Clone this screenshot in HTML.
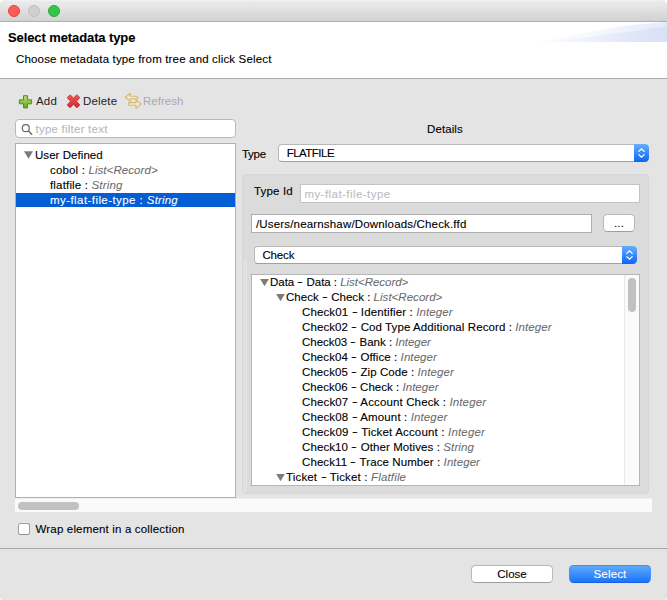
<!DOCTYPE html>
<html>
<head>
<meta charset="utf-8">
<title>Select metadata type</title>
<style>
*{box-sizing:border-box;margin:0;padding:0}
html{width:667px;height:600px;overflow:hidden;background:#fff}
body{width:667px;height:600px;overflow:hidden;background:#e4e4e4;border-radius:5px 5px 3px 3px}
body{font-family:"Liberation Sans",sans-serif;font-size:11.500px;letter-spacing:.17px;color:#000;position:relative;-webkit-text-stroke:.11px}
.abs{position:absolute}
.titlebar{left:0;top:0;width:667px;height:22px;background:linear-gradient(#f4f4f4 0,#ebebeb 1.500px,#d2d2d2 100%);border-bottom:1px solid #afafaf;border-radius:5px 5px 0 0}
.tl{position:absolute;top:5px;width:12px;height:12px;border-radius:50%}
.header{left:0;top:22px;width:667px;height:57px;background:#fff;border-bottom:1px solid #a9a9a9;overflow:hidden}
.h1{left:8px;top:30px;font-weight:bold;font-size:13px;line-height:16px;color:#000;white-space:nowrap;letter-spacing:-.1px}
.h2{left:16px;top:52px;line-height:14px;white-space:nowrap;color:#000;letter-spacing:.16px}
.tb{top:94px;line-height:14px;white-space:nowrap;-webkit-text-stroke:0;color:#1e1e24}
.field{background:#fff;border:1px solid #b4b4b4}
.row{position:absolute;left:0;height:15px;line-height:15px;white-space:nowrap;color:#000}
.row b{font-weight:normal;display:inline-block;position:relative;top:-.700px;width:6px;text-align:center;transform:scaleX(1.500);letter-spacing:0}
.row i{color:#6a6a6a;-webkit-text-stroke:.05px}
.tri{position:absolute;width:9px;height:7.500px;background:#7b7b7b;clip-path:polygon(0 0,100% 0,50% 100%)}
.combo{background:#fff;border-radius:4px;border:1px solid #b9b9b9;border-bottom-color:#a0a0a0;line-height:16px;white-space:nowrap}
.combo .arr{position:absolute;right:-1px;top:-1px;bottom:-1px;width:15px;background:linear-gradient(#66adfc,#3d8ffb 45%,#0b65fe);border-radius:0 4.500px 4.500px 0}
.btn{border-radius:4.500px;background:#fff;border:1px solid #b7b7b7;border-bottom-color:#9e9e9e;text-align:center;line-height:16px;white-space:nowrap}
</style>
</head>
<body>

<!-- title bar -->
<div class="abs titlebar">
  <div class="tl" style="left:8px;background:#fc5b57;border:1px solid #e2443f"></div>
  <div class="tl" style="left:28px;background:#d0d0d0;border:1px solid #bdbdbd"></div>
  <div class="tl" style="left:48px;background:#33c748;border:1px solid #27aa35"></div>
</div>

<!-- white header -->
<div class="abs header">
  <svg class="abs" style="left:500px;top:0" width="167" height="21" viewBox="500 22 167 21">
    <defs>
      <linearGradient id="sw1" x1="525" y1="0" x2="667" y2="0" gradientUnits="userSpaceOnUse"><stop offset="0" stop-color="#dfe6f9" stop-opacity="0"/><stop offset=".3" stop-color="#dfe6f9" stop-opacity=".22"/><stop offset=".65" stop-color="#dde5f8" stop-opacity=".62"/><stop offset="1" stop-color="#d8e0f6"/></linearGradient>
      <linearGradient id="sw2" x1="540" y1="0" x2="667" y2="0" gradientUnits="userSpaceOnUse"><stop offset="0" stop-color="#e8edfb" stop-opacity="0"/><stop offset=".35" stop-color="#e8edfb" stop-opacity=".3"/><stop offset=".7" stop-color="#e6ecfb" stop-opacity=".7"/><stop offset="1" stop-color="#e2e9fa"/></linearGradient>
    </defs>
    <path d="M538 42 C580 34 615 25 667 22 L667 42 Z" fill="url(#sw2)"/>
    <path d="M525 42 C585 39 630 31 667 26.500 L667 42 Z" fill="url(#sw1)"/>
  </svg>
</div>
<div class="abs h1">Select metadata type</div>
<div class="abs h2">Choose metadata type from tree and click Select</div>

<!-- toolbar -->
<svg class="abs" style="left:18px;top:94px" width="15" height="15" viewBox="18 94 15 15">
  <defs><linearGradient id="gp" x1="0" y1="95" x2="0" y2="108" gradientUnits="userSpaceOnUse"><stop offset="0" stop-color="#bfe070"/><stop offset="1" stop-color="#62a623"/></linearGradient></defs>
  <path d="M23.500 95.700 h4 v4.100 h4.100 v4 h-4.100 v4.100 h-4 v-4.100 h-4.100 v-4 h4.100 z" fill="url(#gp)" stroke="#4f8f1d" stroke-width="1" stroke-linejoin="round"/>
</svg>
<div class="abs tb" style="left:36px">Add</div>
<svg class="abs" style="left:65px;top:93px" width="17" height="17" viewBox="65 93 17 17">
  <defs><linearGradient id="gx" x1="0" y1="94" x2="0" y2="108" gradientUnits="userSpaceOnUse"><stop offset="0" stop-color="#ef5a5c"/><stop offset="1" stop-color="#d32a32"/></linearGradient></defs>
  <path d="M67.600 97.200 L69.600 95.200 Q70.200 94.800 70.800 95.300 L73.500 98.300 L76.200 95.300 Q76.800 94.800 77.400 95.200 L79.400 97.200 Q79.800 97.800 79.300 98.400 L76.300 101.300 L79.300 104.200 Q79.800 104.800 79.400 105.400 L77.400 107.400 Q76.800 107.800 76.200 107.300 L73.500 104.300 L70.800 107.300 Q70.200 107.800 69.600 107.400 L67.600 105.400 Q67.200 104.800 67.700 104.200 L70.700 101.300 L67.700 98.400 Q67.200 97.800 67.600 97.200 Z" fill="url(#gx)" stroke="#c3242c" stroke-width=".8" stroke-linejoin="round"/>
</svg>
<div class="abs tb" style="left:83px">Delete</div>
<svg class="abs" style="left:123px;top:91px" width="20" height="20" viewBox="123 91 20 20">
  <path d="M125.300 97.300 L130.300 93.300 V96.200 H137.500 V98.800 H130.300 V101.300 Z" fill="#f1e9d8" stroke="#d8b875" stroke-width="1.100" stroke-linejoin="round"/>
  <path d="M141 104 L136 99.800 V102.600 H128.600 V105.300 H136 V108.300 Z" fill="#f1e9d8" stroke="#d8b875" stroke-width="1.100" stroke-linejoin="round"/>
</svg>
<div class="abs tb" style="left:143px;color:#a9a9ad;letter-spacing:.03px">Refresh</div>

<!-- filter -->
<div class="abs field" style="left:15px;top:119px;width:221px;height:19px;border-radius:4px;border-color:#b8b8b8">
  <svg class="abs" style="left:4px;top:2px" width="16" height="16" viewBox="20 122 16 16"><circle cx="25.800" cy="128.200" r="3.500" fill="none" stroke="#686868" stroke-width="1.200"/><path d="M28.500 131 L31.800 134.300" stroke="#686868" stroke-width="1.400" stroke-linecap="round"/></svg>
  <div class="abs" style="left:19.500px;top:2px;line-height:15px;color:#b8b8bd;white-space:nowrap;letter-spacing:.23px">type filter text</div>
</div>

<!-- left tree -->
<div class="abs field" style="left:15px;top:143px;width:221px;height:355px;border-color:#b0b0b0">
  <div class="tri" style="left:8px;top:7.250px"></div>
  <div class="row" style="top:4px;padding-left:19px;width:219px;letter-spacing:.05px">User Defined</div>
  <div class="row" style="top:19px;padding-left:34px;width:219px">cobol : <i style="letter-spacing:.07px">List&lt;Record&gt;</i></div>
  <div class="row" style="top:34px;padding-left:34px;width:219px">flatfile : <i>String</i></div>
  <div class="abs" style="left:0;top:49px;width:219px;height:14px;background:#035dd5"></div><div class="row" style="top:49px;padding-left:34px;width:219px;color:#fff;letter-spacing:.43px">my-flat-file-type : <i style="color:#fff;letter-spacing:.17px">String</i></div>
</div>

<!-- horizontal scrollbar band -->
<div class="abs" style="left:15px;top:498px;width:637px;height:14px;background:linear-gradient(#efefef 0,#efefef 1px,#fafafa 1px)"></div>
<div class="abs" style="left:18px;top:502px;width:61px;height:8px;border-radius:4px;background:#c1c1c1"></div>

<!-- details -->
<div class="abs" style="left:427px;top:122px;line-height:14px;letter-spacing:.1px">Details</div>
<div class="abs" style="left:242px;top:147px;line-height:14px;letter-spacing:-.3px">Type</div>
<div class="abs combo" style="left:278px;top:144px;width:371px;height:18px;padding-left:7.700px;letter-spacing:-.52px">FLATFILE<div class="arr"><svg style="display:block" width="15" height="18" viewBox="0 0 15 18"><path d="M4.800 7.400 L7.500 4.900 L10.200 7.400 M4.800 10.600 L7.500 13.100 L10.200 10.600" fill="none" stroke="#fff" stroke-width="1.250" stroke-linecap="round" stroke-linejoin="miter"/></svg></div></div>

<!-- group -->
<div class="abs" style="left:242px;top:174px;width:407px;height:320px;background:#dbdbdb;border-radius:4px;border:1px solid #d5d5d5"></div>
<div class="abs" style="left:243px;top:260px;width:4px;height:233px;background:#e1e1e1"></div>

<div class="abs" style="left:254px;top:184px;line-height:14px">Type Id</div>
<div class="abs field" style="left:300px;top:184px;width:340px;height:19px;border-color:#c3c3c3">
  <div class="abs" style="left:3.500px;top:2px;line-height:15px;color:#bdbdc1;white-space:nowrap;letter-spacing:.44px">my-flat-file-type</div>
</div>
<div class="abs field" style="left:251px;top:214px;width:341px;height:19px;border-color:#aeaeae">
  <div class="abs" style="left:4px;top:2px;line-height:15px;white-space:nowrap">/Users/nearnshaw/Downloads/Check.ffd</div>
</div>
<div class="abs btn" style="left:603px;top:214px;width:32px;height:18px;line-height:17px">...</div>

<div class="abs combo" style="left:254px;top:246px;width:383px;height:18px;padding-left:7.400px;letter-spacing:-.13px">Check<div class="arr"><svg style="display:block" width="15" height="18" viewBox="0 0 15 18"><path d="M4.800 7.400 L7.500 4.900 L10.200 7.400 M4.800 10.600 L7.500 13.100 L10.200 10.600" fill="none" stroke="#fff" stroke-width="1.250" stroke-linecap="round" stroke-linejoin="miter"/></svg></div></div>

<!-- inner tree -->
<div class="abs field" style="left:251px;top:274px;width:389px;height:212px;border-color:#b6b6b6;overflow:hidden">
  <div class="abs" style="right:0;top:0;width:15px;height:210px;background:#fafafa;border-left:1px solid #e8e8e8"></div>
  <div class="abs" style="left:376px;top:3px;width:8px;height:34px;border-radius:4px;background:#c1c1c1"></div>
  <div class="tri" style="left:8px;top:3.700px"></div>
  <div class="row" style="top:0px;left:18px;letter-spacing:-0.03px">Data <b>-</b> Data : <i>List&lt;Record&gt;</i></div>
  <div class="tri" style="left:24px;top:18.700px"></div>
  <div class="row" style="top:15px;left:34px;letter-spacing:0.028px">Check <b>-</b> Check : <i>List&lt;Record&gt;</i></div>
  <div class="row" style="top:30px;left:50px;letter-spacing:0.12px">Check01 <b>-</b> Identifier : <i>Integer</i></div>
  <div class="row" style="top:45px;left:50px;letter-spacing:0.094px">Check02 <b>-</b> Cod Type Additional Record : <i>Integer</i></div>
  <div class="row" style="top:60px;left:50px;letter-spacing:-0.022px">Check03 <b>-</b> Bank : <i>Integer</i></div>
  <div class="row" style="top:75px;left:50px;letter-spacing:0.078px">Check04 <b>-</b> Office : <i>Integer</i></div>
  <div class="row" style="top:90px;left:50px;letter-spacing:0.074px">Check05 <b>-</b> Zip Code : <i>Integer</i></div>
  <div class="row" style="top:105px;left:50px;letter-spacing:0.03px">Check06 <b>-</b> Check : <i>Integer</i></div>
  <div class="row" style="top:120px;left:50px;letter-spacing:0.133px">Check07 <b>-</b> Account Check : <i>Integer</i></div>
  <div class="row" style="top:135px;left:50px;letter-spacing:0.128px">Check08 <b>-</b> Amount : <i>Integer</i></div>
  <div class="row" style="top:150px;left:50px;letter-spacing:0.174px">Check09 <b>-</b> Ticket Account : <i>Integer</i></div>
  <div class="row" style="top:165px;left:50px;letter-spacing:0.095px">Check10 <b>-</b> Other Motives : <i>String</i></div>
  <div class="row" style="top:180px;left:50px;letter-spacing:0.092px">Check11 <b>-</b> Trace Number : <i>Integer</i></div>
  <div class="tri" style="left:24px;top:198.700px"></div>
  <div class="row" style="top:195px;left:34px;letter-spacing:0.162px">Ticket <b>-</b> Ticket : <i>Flatfile</i></div>
</div>

<!-- checkbox -->
<div class="abs" style="left:18px;top:523px;width:12px;height:12px;background:#fff;border:1px solid #a0a0a0;border-bottom-color:#929292;border-radius:2.500px"></div>
<div class="abs" style="left:35.500px;top:522px;line-height:14px;white-space:nowrap">Wrap element in a collection</div>

<!-- separator -->
<div class="abs" style="left:0;top:548px;width:667px;height:1px;background:#a6a6a6"></div>

<!-- buttons -->
<div class="abs btn" style="left:471px;top:565px;width:82px;height:18px;letter-spacing:0">Close</div>
<div class="abs btn" style="left:569px;top:565px;width:82px;height:18px;color:#fff;background:linear-gradient(#5eaafc,#1a75f8);border-color:#3f92f7;border-bottom-color:#1760e0">Select</div>

</body>
</html>
